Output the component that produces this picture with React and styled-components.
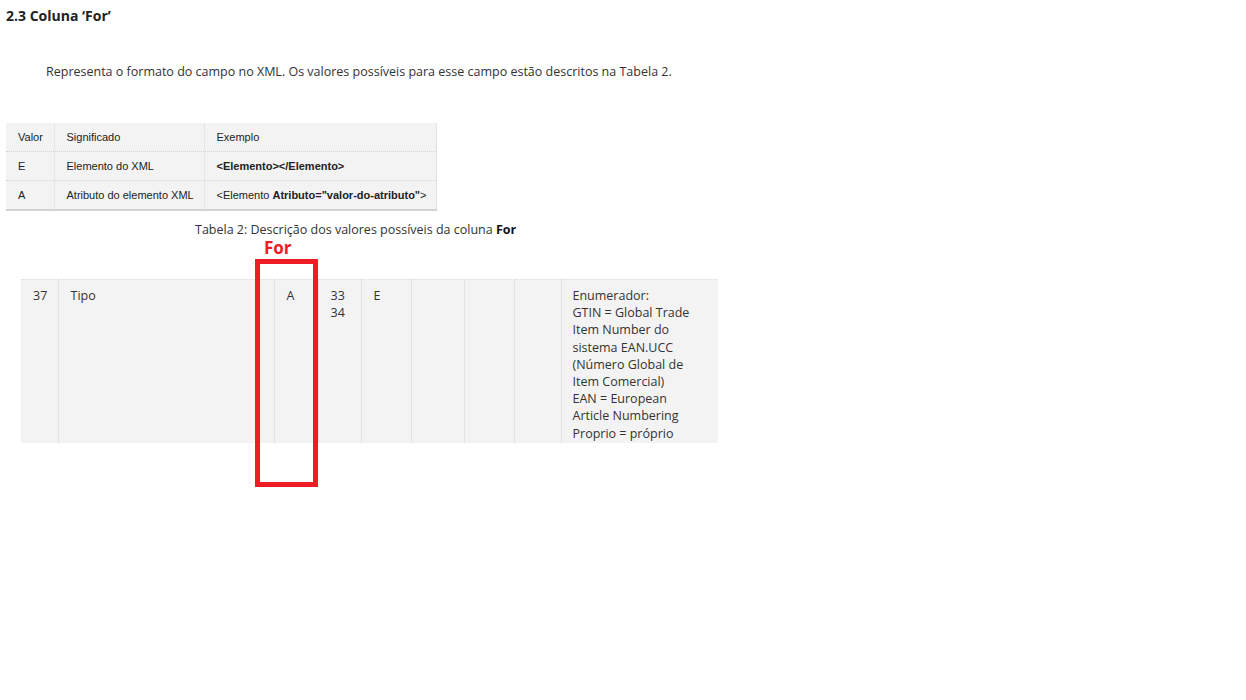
import React from 'react';
import styled, { createGlobalStyle } from 'styled-components';

const valores = [
  { valor: 'Valor', significado: 'Significado', exemplo: 'Exemplo' },
  { valor: 'E', significado: 'Elemento do XML', exemplo: <b>&lt;Elemento&gt;&lt;/Elemento&gt;</b> },
  {
    valor: 'A',
    significado: 'Atributo do elemento XML',
    exemplo: (
      <>
        &lt;Elemento <b>Atributo="valor-do-atributo"</b>&gt;
      </>
    ),
  },
];

const enumerador = [
  'Enumerador:',
  'GTIN = Global Trade',
  'Item Number do',
  'sistema EAN.UCC',
  '(Número Global de',
  'Item Comercial)',
  'EAN = European',
  'Article Numbering',
  'Proprio = próprio',
];

const App = () => (
  <>
    <GlobalStyle />
    <Page>
      <Heading>2.3 Coluna ‘For’</Heading>
      <Paragraph>
        Representa o formato do campo no XML. Os valores possíveis para esse campo estão descritos na Tabela 2.
      </Paragraph>

      <SmallTable>
        <colgroup>
          <col style={{ width: 48 }} />
          <col style={{ width: 150 }} />
          <col style={{ width: 232 }} />
        </colgroup>
        <tbody>
          {valores.map((v) => (
            <SmallRow key={v.valor}>
              <SmallCell>{v.valor}</SmallCell>
              <SmallCell>{v.significado}</SmallCell>
              <SmallCell>{v.exemplo}</SmallCell>
            </SmallRow>
          ))}
        </tbody>
      </SmallTable>

      <Caption>
        Tabela 2: Descrição dos valores possíveis da coluna <b>For</b>
      </Caption>

      <FieldWrap>
        <FieldTable>
          <tbody>
            <tr>
              <FieldCell $w={37}>37</FieldCell>
              <FieldCell $w={216}>Tipo</FieldCell>
              <FieldCell $w={44}>A</FieldCell>
              <FieldCell $w={43}>
                33
                <br />
                34
              </FieldCell>
              <FieldCell $w={50}>E</FieldCell>
              <FieldCell $w={53} />
              <FieldCell $w={50} />
              <FieldCell $w={47} />
              <FieldCell $w={157} $last>
                {enumerador.map((l) => (
                  <div key={l}>{l}</div>
                ))}
              </FieldCell>
            </tr>
          </tbody>
        </FieldTable>
        <MarkLabel>For</MarkLabel>
        <MarkBox />
      </FieldWrap>
    </Page>
  </>
);

export default App;

const GlobalStyle = createGlobalStyle`
  body {
    margin: 0;
    background: #fff;
    font-family: "Open Sans", "Noto Sans", sans-serif;
    color: #333;
  }
`;

const Page = styled.div`
  padding: 7px 6px 0;
  min-height: 700px;
  box-sizing: border-box;
`;

const Heading = styled.h3`
  margin: 0;
  font-size: 14px;
  line-height: 18px;
  font-weight: 700;
  color: #222;
`;

const Paragraph = styled.p`
  margin: 38px 0 0;
  padding-left: 40px;
  font-size: 12.5px;
  line-height: 18px;
`;

const SmallTable = styled.table`
  margin-top: 42px;
  width: 430px;
  table-layout: fixed;
  border-collapse: collapse;
  background: #f3f3f3;
  font-family: "Liberation Sans", Arial, sans-serif;
  font-size: 11px;
  color: #222;
  border-right: 1px solid #e2e2e2;
  border-bottom: 2px solid #d2d2d2;
`;

const SmallRow = styled.tr`
  & + & td {
    border-top: 1px dotted #d4d4d4;
  }
`;

const SmallCell = styled.td`
  height: 27px;
  padding: 0 0 1px 12px;
  border-right: 1px solid #e6e6e6;
  white-space: nowrap;

  &:last-child {
    border-right: none;
  }
`;

const Caption = styled.div`
  margin-top: 10px;
  padding-left: 189px;
  font-size: 12.5px;
  line-height: 18px;
  color: #333;

  b {
    color: #111;
  }
`;

const FieldWrap = styled.div`
  position: relative;
  margin: 40px 0 0 15px;
  width: 697px;
`;

const FieldTable = styled.table`
  border-collapse: collapse;
  table-layout: fixed;
  width: 697px;
  background: #f3f3f3;
  border-top: 1px dotted #dcdcdc;
  font-size: 12.5px;
  line-height: 17.2px;
  color: #333;
`;

const FieldCell = styled.td`
  width: ${(p) => p.$w}px;
  box-sizing: border-box;
  height: 163px;
  padding: 7px 4px 1px ${(p) => (p.$last ? 11 : 12)}px;
  vertical-align: top;
  border-right: ${(p) => (p.$last ? 'none' : '1px solid #e2e2e2')};
`;

const MarkLabel = styled.div`
  position: absolute;
  left: 243px;
  top: -39px;
  font-size: 17px;
  line-height: 16px;
  font-weight: 700;
  color: #ee1d24;
`;

const MarkBox = styled.div`
  position: absolute;
  left: 234px;
  top: -20px;
  width: 63px;
  height: 228px;
  box-sizing: border-box;
  border: 5px solid #ee1d24;
`;
